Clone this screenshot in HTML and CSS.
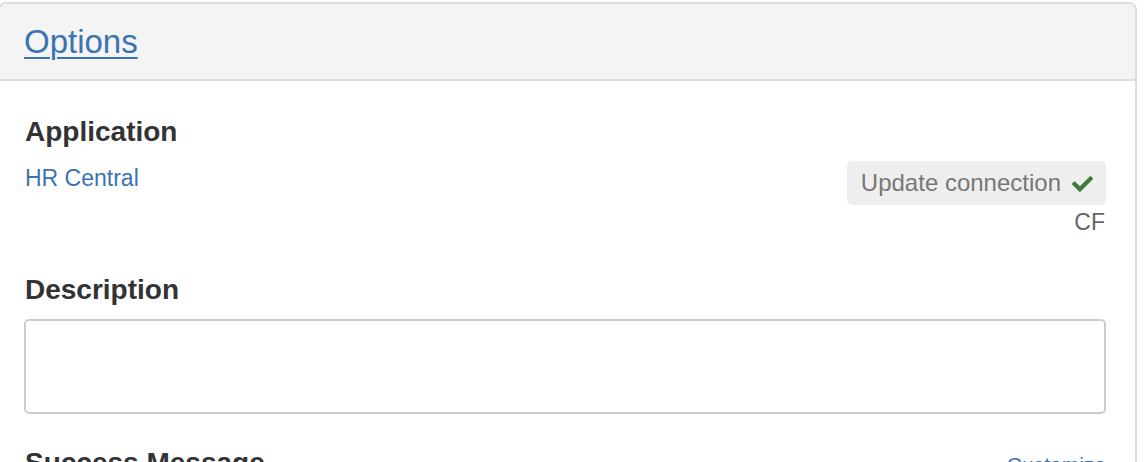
FILE: index.html
```html
<!DOCTYPE html>
<html lang="en">
<head>
<meta charset="utf-8">
<title>Options</title>
<link rel="stylesheet" href="styles.css">
</head>
<body>
<div class="panel">
  <div class="panel-heading">
    <a class="panel-title" href="#">Options</a>
  </div>
  <div class="panel-body">
    <div class="label">Application</div>
    <div class="app-row">
      <a class="app-link" href="#">HR Central</a>
      <div class="conn">
        <button class="btn-conn" type="button">Update connection
          <svg class="check" viewBox="0 60 512 392" width="21" height="16" aria-hidden="true"><path fill="#3d7a3b" d="M173.898 439.404l-166.4-166.4c-9.997-9.997-9.997-26.206 0-36.204l36.203-36.204c9.997-9.998 26.207-9.998 36.204 0L192 312.69 432.095 72.596c9.997-9.997 26.207-9.997 36.204 0l36.203 36.204c9.997 9.997 9.997 26.206 0 36.204l-294.4 294.401c-9.998 9.997-26.207 9.997-36.204-.001z"/></svg>
        </button>
        <div class="conn-code">CF</div>
      </div>
    </div>
    <div class="label label-desc">Description</div>
    <textarea class="desc-input"></textarea>
    <div class="msg-row">
      <div class="label">Success Message</div>
      <a class="msg-link" href="#">Customize</a>
    </div>
  </div>
</div>
</body>
</html>
```

FILE: styles.css
```css
html, body {
  margin: 0;
  padding: 0;
  background: #fff;
  font-family: "Liberation Sans", Arial, Helvetica, sans-serif;
  color: #333;
  overflow: hidden;
}

.panel {
  margin: 2px 7px 0 -2px;
  border: 2px solid #ddd;
  border-radius: 8px;
  background: #fff;
}

.panel-heading {
  background: #f4f4f4;
  border-bottom: 2px solid #ddd;
  border-radius: 6px 6px 0 0;
  padding: 18px 25px 17px 24px;
  height: 40px;
}

.panel-title {
  font-size: 33px;
  line-height: 40px;
  color: #3a73b3;
  text-decoration: underline;
  text-decoration-thickness: 2px;
  text-underline-offset: 4px;
}

.panel-body {
  padding: 35px 29px 0 25px;
}

.label {
  font-size: 28px;
  line-height: 32px;
  font-weight: 700;
  color: #333;
}

.app-row {
  display: flex;
  justify-content: space-between;
  align-items: flex-start;
  margin-top: 13px;
}

.app-link {
  font-size: 23px;
  line-height: 28px;
  padding-top: 3px;
  color: #3a73b3;
  text-decoration: none;
}

.conn {
  display: flex;
  flex-direction: column;
  align-items: flex-end;
}

.btn-conn {
  display: flex;
  align-items: center;
  gap: 11px;
  height: 44px;
  padding: 0 13px 0 14px;
  border: none;
  border-radius: 5px;
  background: #eee;
  color: #777;
  font-family: "Liberation Sans", Arial, Helvetica, sans-serif;
  font-size: 24px;
  line-height: 28px;
}

.check {
  display: block;
  margin-top: 1px;
}

.conn-code {
  margin-top: 3px;
  font-size: 23px;
  line-height: 28px;
  color: #666;
  padding-right: 1px;
}

.label-desc {
  margin-top: 38px;
}

.desc-input {
  display: block;
  box-sizing: border-box;
  height: 95px;
  margin: 13px 0 0 -1px;
  width: calc(100% + 1px);
  border: 2px solid #ccc;
  border-radius: 5px;
  resize: none;
  background: #fff;
  font-family: inherit;
  font-size: 20px;
}

.msg-row {
  display: flex;
  justify-content: space-between;
  align-items: baseline;
  margin-top: 33px;
}

.msg-link {
  font-size: 21px;
  color: #3a73b3;
  text-decoration: none;
}
```
